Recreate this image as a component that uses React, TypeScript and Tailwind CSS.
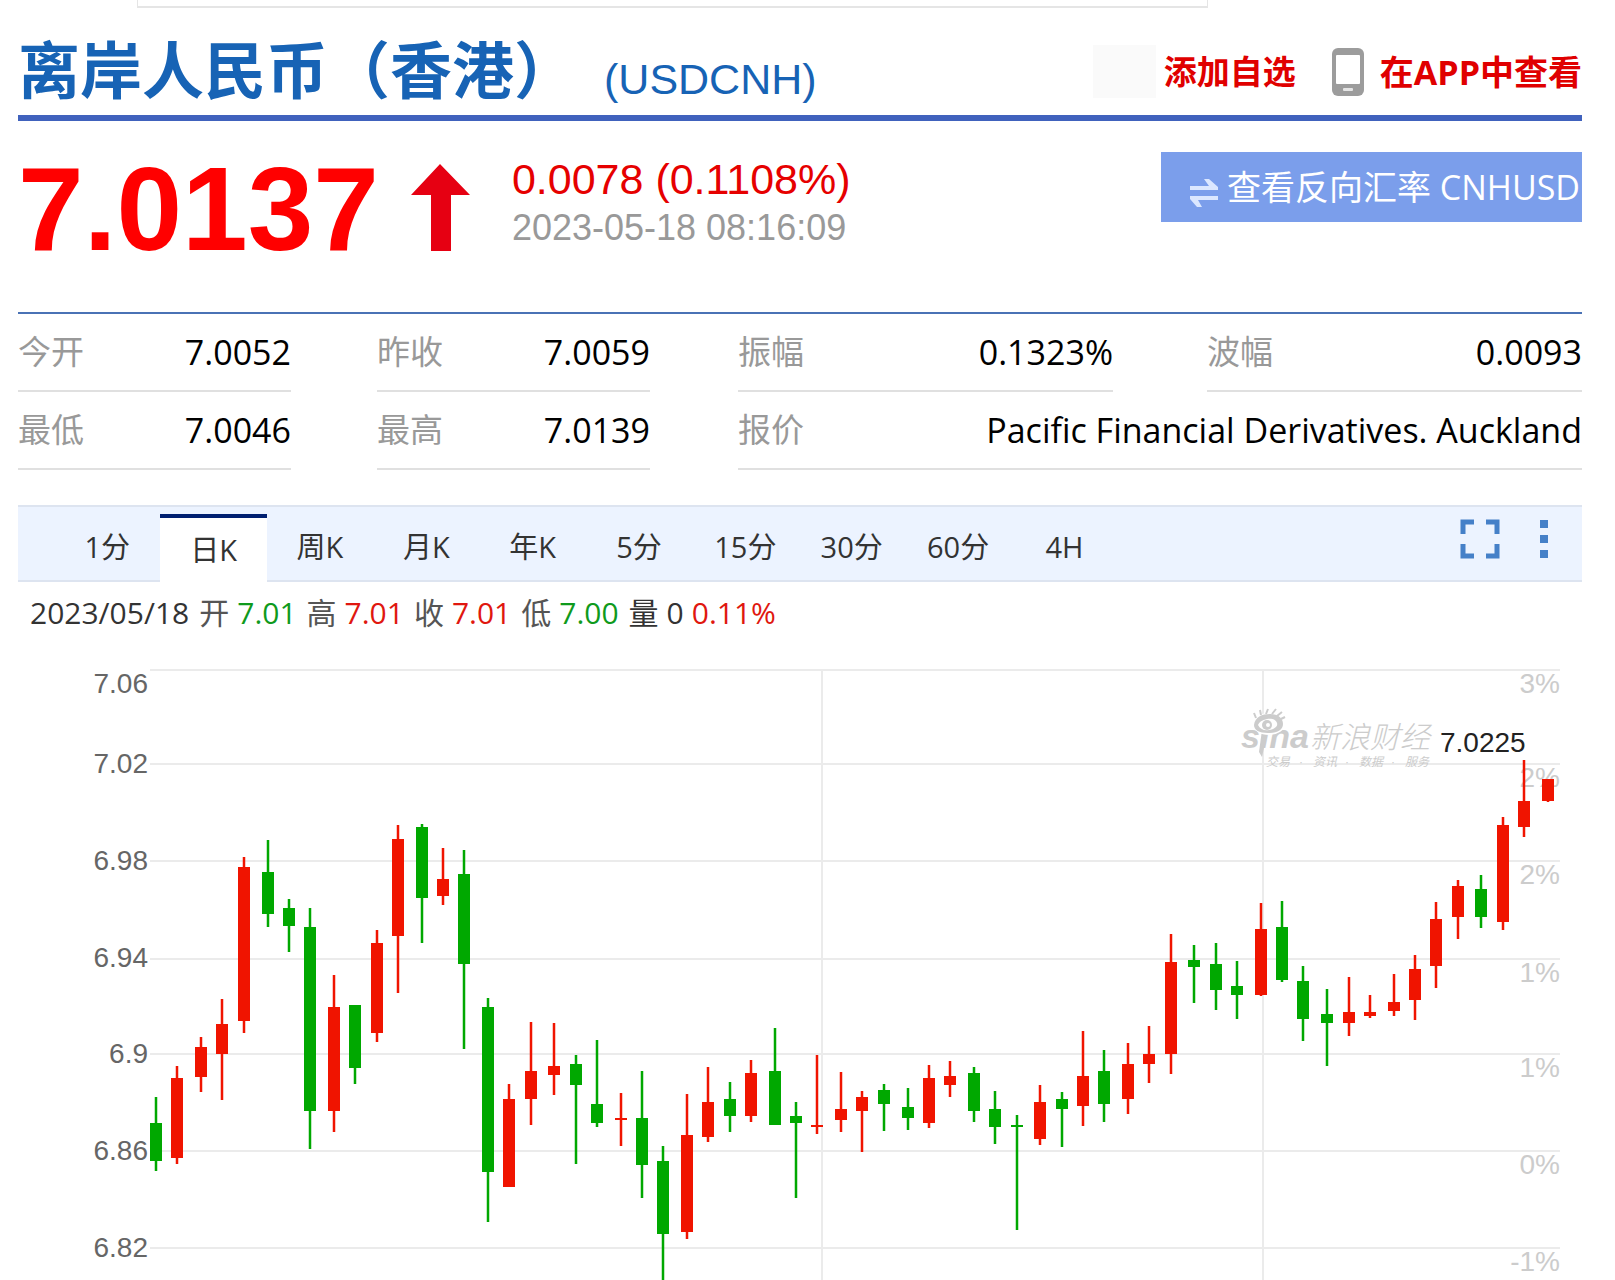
import React from 'react'

type Candle = [x: number, high: number, top: number, bottom: number, low: number, up: boolean]

const candles: Candle[] = [
    [156, 1097, 1123, 1161, 1171, false],
    [177, 1066, 1078, 1158, 1164, true],
    [201, 1037, 1047, 1077, 1092, true],
    [222, 999, 1024, 1054, 1100, true],
    [244, 857, 867, 1021, 1033, true],
    [268, 840, 872, 914, 927, false],
    [289, 899, 908, 926, 952, false],
    [310, 908, 927, 1111, 1149, false],
    [334, 975, 1007, 1111, 1132, true],
    [355, 1005, 1005, 1068, 1084, false],
    [377, 930, 943, 1033, 1042, true],
    [398, 825, 839, 936, 993, true],
    [422, 824, 827, 898, 943, false],
    [443, 848, 879, 896, 905, true],
    [464, 850, 874, 964, 1049, false],
    [488, 998, 1007, 1172, 1222, false],
    [509, 1084, 1099, 1187, 1187, true],
    [531, 1022, 1071, 1099, 1125, true],
    [554, 1023, 1066, 1075, 1095, true],
    [576, 1055, 1064, 1085, 1164, false],
    [597, 1040, 1104, 1123, 1127, false],
    [621, 1093, 1118, 1120, 1146, true],
    [642, 1071, 1118, 1165, 1198, false],
    [663, 1146, 1161, 1234, 1290, false],
    [687, 1094, 1135, 1232, 1239, true],
    [708, 1067, 1102, 1137, 1142, true],
    [730, 1082, 1099, 1116, 1132, false],
    [751, 1060, 1073, 1116, 1122, true],
    [775, 1028, 1071, 1125, 1125, false],
    [796, 1102, 1116, 1123, 1198, false],
    [817, 1055, 1125, 1127, 1134, true],
    [841, 1072, 1109, 1120, 1132, true],
    [862, 1091, 1097, 1111, 1152, true],
    [884, 1084, 1090, 1104, 1131, false],
    [908, 1088, 1107, 1118, 1130, false],
    [929, 1065, 1078, 1123, 1128, true],
    [950, 1061, 1076, 1085, 1097, true],
    [974, 1067, 1073, 1111, 1122, false],
    [995, 1091, 1109, 1127, 1144, false],
    [1017, 1115, 1125, 1127, 1230, false],
    [1040, 1085, 1102, 1139, 1145, true],
    [1062, 1092, 1099, 1109, 1147, false],
    [1083, 1031, 1076, 1106, 1126, true],
    [1104, 1050, 1071, 1104, 1122, false],
    [1128, 1043, 1064, 1099, 1114, true],
    [1149, 1026, 1054, 1064, 1083, true],
    [1171, 934, 962, 1054, 1074, true],
    [1194, 945, 960, 967, 1003, false],
    [1216, 943, 964, 990, 1010, false],
    [1237, 961, 986, 995, 1019, false],
    [1261, 903, 929, 995, 996, true],
    [1282, 901, 927, 980, 982, false],
    [1303, 966, 981, 1019, 1041, false],
    [1327, 989, 1014, 1023, 1066, false],
    [1349, 977, 1012, 1023, 1036, true],
    [1370, 995, 1012, 1016, 1018, true],
    [1394, 974, 1002, 1011, 1016, true],
    [1415, 955, 969, 1000, 1020, true],
    [1436, 902, 919, 966, 988, true],
    [1458, 880, 886, 917, 939, true],
    [1481, 875, 889, 917, 928, false],
    [1503, 817, 825, 922, 930, true],
    [1524, 760, 801, 827, 837, true],
    [1548, 779, 779, 801, 802, true],
]

const gridRows = [
    { y: 670, price: '7.06', priceY: 693, pct: '3%' },
    { y: 764, price: '7.02', priceY: 773, pct: '2%' },
    { y: 861, price: '6.98', priceY: 870, pct: '2%' },
    { y: 959, price: '6.94', priceY: 967, pct: '1%' },
    { y: 1054, price: '6.9', priceY: 1063, pct: '1%' },
    { y: 1151, price: '6.86', priceY: 1160, pct: '0%' },
    { y: 1248, price: '6.82', priceY: 1257, pct: '-1%' },
]

const stats = [
    { label: '今开', value: '7.0052', cell: 'mr-[86px]' },
    { label: '昨收', value: '7.0059', cell: 'mr-[88px]' },
    { label: '振幅', value: '0.1323%', cell: 'mr-[94px]' },
    { label: '波幅', value: '0.0093', cell: '' },
    { label: '最低', value: '7.0046', cell: 'mr-[86px]' },
    { label: '最高', value: '7.0139', cell: 'mr-[88px]' },
    { label: '报价', value: 'Pacific Financial Derivatives. Auckland', cell: 'col-span-2' },
]

const tabs = ['1分', '日K', '周K', '月K', '年K', '5分', '15分', '30分', '60分', '4H']

const quotes = [
    { label: '开', value: '7.01', color: 'text-[#0f9a1c]' },
    { label: '高', value: '7.01', color: 'text-[#e0170f]' },
    { label: '收', value: '7.01', color: 'text-[#e0170f]' },
    { label: '低', value: '7.00', color: 'text-[#0f9a1c]' },
]

const PhoneIcon = () => (
    <svg width="32" height="48" viewBox="0 0 32 48" aria-hidden="true">
        <rect width="32" height="48" rx="6" fill="#9c9c9c" />
        <rect x="4" y="7" width="24" height="29" rx="1" fill="#fff" />
        <rect x="11" y="40" width="10" height="3" rx="1" fill="#e5e5e5" />
    </svg>
)

const SwapIcon = () => (
    <svg width="30" height="30" viewBox="0 0 30 30" fill="#dbe7ff" aria-hidden="true">
        <path d="M1 8H20L15 1H20L29 9V12H1Z" />
        <path d="M29 18H1V21L8 29H13L9 22H29Z" />
    </svg>
)

const Watermark = () => (
    <g fill="#ccc" fontStyle="italic">
        <text x="1241" y="748" fontSize="34" fontWeight="bold">sina</text>
        <path d="M1262 730H1268L1262 757L1259 752Z" />
        <ellipse cx="1269" cy="724" rx="16" ry="11" fill="#fff" />
        <path
            fillRule="evenodd"
            d="M1254 725C1255 717 1262 714 1270 714C1278 714 1283 718 1283 724C1283 730 1277 733 1268 733C1259 733 1254 730 1254 725ZM1258 725C1260 729 1264 731 1269 730C1275 729 1278 726 1277 723C1276 719 1271 718 1267 719C1262 720 1259 722 1258 725Z"
        />
        <circle cx="1267" cy="725" r="5" />
        <circle cx="1268" cy="725" r="2" fill="#fff" />
        <path d="M1256 718L1254 713M1261 715L1260 710M1266 714L1268 709M1272 714L1276 709M1277 716L1282 712M1281 719L1285 717" stroke="#ccc" strokeWidth="2" />
        <text x="1310" y="748" fontSize="30" fontWeight="300">新浪财经</text>
        <text y="766" fontSize="12">
            <tspan x="1266">交易</tspan>
            <tspan x="1299">·</tspan>
            <tspan x="1313">资讯</tspan>
            <tspan x="1345">·</tspan>
            <tspan x="1359">数据</tspan>
            <tspan x="1391">·</tspan>
            <tspan x="1405">服务</tspan>
        </text>
    </g>
)

const KLineChart = () => (
    <svg
        viewBox="0 640 1615 640"
        className="block w-full font-['Liberation_Sans','Noto_Sans_CJK_SC',sans-serif]"
        role="img"
        aria-label="日K"
    >
        <g stroke="#ebebeb" strokeWidth="2">
            {gridRows.map((row) => (
                <line key={row.y} x1="150" x2="1560" y1={row.y} y2={row.y} />
            ))}
            <line x1="822" x2="822" y1="670" y2="1290" />
            <line x1="1263" x2="1263" y1="670" y2="1290" />
        </g>
        <g fontSize="28" textAnchor="end">
            {gridRows.map((row) => (
                <React.Fragment key={row.y}>
                    <text x="148" y={row.priceY} fill="#666">{row.price}</text>
                    <text x="1560" y={row.y + 23} fill="#ccc">{row.pct}</text>
                </React.Fragment>
            ))}
        </g>
        <Watermark />
        {candles.map(([x, high, top, bottom, low, up]) => (
            <g key={x} fill={up ? '#f01400' : '#00a800'}>
                <rect x={x - 1.25} y={high} width="2.5" height={low - high} />
                <rect x={x - 6} y={top} width="12" height={bottom - top} />
            </g>
        ))}
        <text x="1440" y="752" fontSize="28" fill="#222">7.0225</text>
    </svg>
)

const App = () => {
    return (
        <div className="overflow-hidden bg-white font-['Open_Sans','Noto_Sans_CJK_SC',sans-serif]">
            <div className="mr-[407px] ml-[137px] h-2 border-x border-b-2 border-[#e5e5e5]" />

            <div className="pr-[33px] pl-[18px]">
                <header className="flex h-[113px] items-center justify-between border-b-6 border-[#4062bd] pt-4">
                    <h1 className="flex items-baseline gap-7 text-[#1763b5]">
                        <span className="text-[62px] leading-[80px] font-bold">离岸人民币（香港）</span>
                        <span className="font-['Liberation_Sans',sans-serif] text-[43px] leading-none">(USDCNH)</span>
                    </h1>
                    <div className="flex items-center pt-1 text-[33px] leading-[48px] font-bold text-[#e00000]">
                        <span className="mr-2 h-[53px] w-[63px] bg-[#fafafa]" />
                        <a href="#watch">添加自选</a>
                        <a href="#app" className="ml-9 flex items-center gap-4">
                            <PhoneIcon />
                            <span className="text-[34px]">在APP中查看</span>
                        </a>
                    </div>
                </header>

                <section className="flex h-[191px] items-start justify-between">
                    <div className="flex items-start font-['Liberation_Sans',sans-serif]">
                        <strong className="mt-7 text-[118px] leading-[120px] text-[#f00]">7.0137</strong>
                        <svg width="59" height="87" viewBox="0 0 59 87" className="mt-[43px] ml-8" aria-hidden="true">
                            <path d="M29 0L59 31H40V87H20V31H0Z" fill="#e60012" />
                        </svg>
                        <div className="mt-[34px] ml-[42px]">
                            <div className="text-[43px] leading-[48px] text-[#e60000]">0.0078 (0.1108%)</div>
                            <div className="text-[36px] leading-[50px] text-[#999]">2023-05-18 08:16:09</div>
                        </div>
                    </div>
                    <a href="#reverse" className="mt-[31px] flex h-[70px] items-center gap-2 bg-[#7b9eeb] pr-[2px] pl-7 text-[34px] text-white">
                        <span className="pt-3">
                            <SwapIcon />
                        </span>
                        查看反向汇率 CNHUSD
                    </a>
                </section>

                <dl className="grid grid-cols-[359fr_361fr_469fr_375fr] border-t-2 border-[#4a72b5] leading-[48px]">
                    {stats.map((item) => (
                        <div key={item.label} className={`flex h-[78px] items-center justify-between border-b-2 border-[#e0e0e0] ${item.cell}`}>
                            <dt className="text-[33px] text-[#999]">{item.label}</dt>
                            <dd className="text-[34px] text-black">{item.value}</dd>
                        </div>
                    ))}
                </dl>

                <div className="mt-[35px] flex h-[77px] justify-between border-y-2 border-[#dde4f0] bg-[#ecf3ff]">
                    <div role="tablist" className="ml-[36px] flex w-[68%] text-[29px] text-[#333]">
                        {tabs.map((tab) =>
                            tab === '日K' ? (
                                <button key={tab} role="tab" aria-selected="true" className="-mb-[2px] mt-[7px] flex-1 border-t-4 border-[#001f70] bg-white">
                                    {tab}
                                </button>
                            ) : (
                                <button key={tab} role="tab" aria-selected="false" className="flex-1 pt-1.5">
                                    {tab}
                                </button>
                            )
                        )}
                    </div>
                    <div className="flex items-start gap-10 pt-3 pr-[34px]">
                        <button aria-label="全屏">
                            <svg width="40" height="40" viewBox="0 0 40 40" fill="none" stroke="#4580c8" strokeWidth="5">
                                <path d="M3 15V3H14M26 3H37V15M37 25V37H26M14 37H3V25" />
                            </svg>
                        </button>
                        <button aria-label="更多">
                            <svg width="8" height="40" viewBox="0 0 8 40" fill="#4580c8">
                                <path d="M0 1H8V9H0ZM0 16H8V24H0ZM0 31H8V39H0Z" />
                            </svg>
                        </button>
                    </div>
                </div>

                <div className="flex h-[58px] items-center gap-2.5 pt-1 pl-3 text-[30px] leading-none text-[#333]">
                    <span>2023/05/18</span>
                    {quotes.map((q) => (
                        <span key={q.label} className="flex gap-2 text-[#555]">
                            {q.label}
                            <span className={q.color}>{q.value}</span>
                        </span>
                    ))}
                    <span className="flex gap-2">
                        量
                        <span>0</span>
                        <span className="text-[#e0170f]">0.11%</span>
                    </span>
                </div>
            </div>

            <KLineChart />
        </div>
    )
}

export default App
